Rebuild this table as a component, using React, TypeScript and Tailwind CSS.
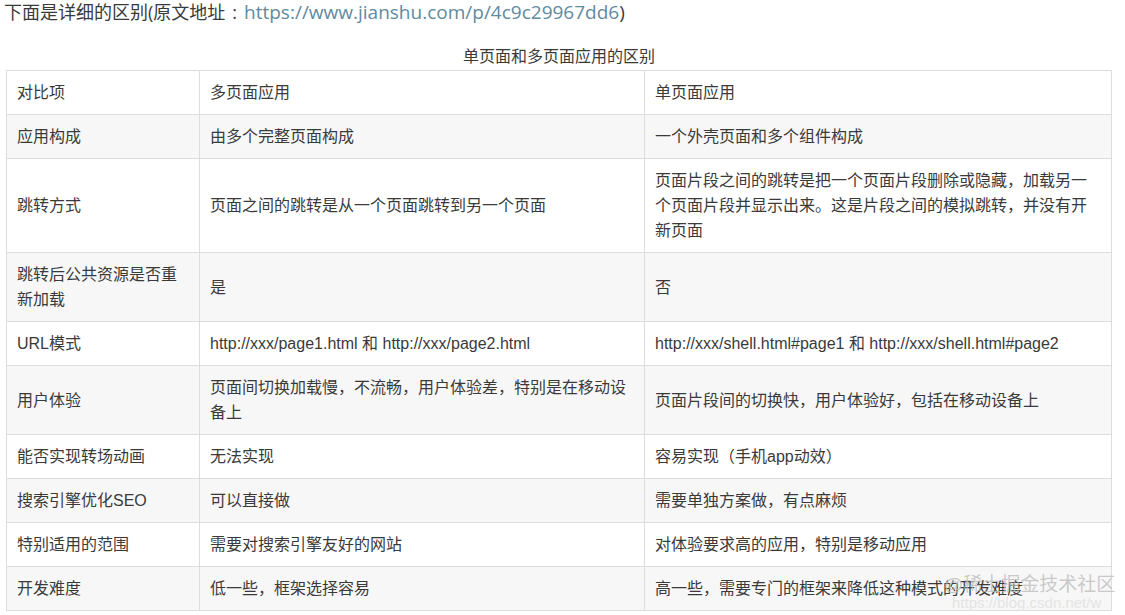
import React from 'react';

type Row = { label: React.ReactNode; multi: React.ReactNode; single: React.ReactNode };

const ROWS: Row[] = [
  { label: '对比项', multi: '多页面应用', single: '单页面应用' },
  { label: '应用构成', multi: '由多个完整页面构成', single: '一个外壳页面和多个组件构成' },
  {
    label: '跳转方式',
    multi: '页面之间的跳转是从一个页面跳转到另一个页面',
    single: (
      <>
        页面片段之间的跳转是把一个页面片段删除或隐藏，加载另一
        <br />
        个页面片段并显示出来。这是片段之间的模拟跳转，并没有开
        <br />
        新页面
      </>
    ),
  },
  {
    label: (
      <>
        跳转后公共资源是否重
        <br />
        新加载
      </>
    ),
    multi: '是',
    single: '否',
  },
  {
    label: 'URL模式',
    multi: 'http://xxx/page1.html 和 http://xxx/page2.html',
    single: 'http://xxx/shell.html#page1 和 http://xxx/shell.html#page2',
  },
  {
    label: '用户体验',
    multi: (
      <>
        页面间切换加载慢，不流畅，用户体验差，特别是在移动设
        <br />
        备上
      </>
    ),
    single: '页面片段间的切换快，用户体验好，包括在移动设备上',
  },
  { label: '能否实现转场动画', multi: '无法实现', single: '容易实现（手机app动效）' },
  { label: '搜索引擎优化SEO', multi: '可以直接做', single: '需要单独方案做，有点麻烦' },
  { label: '特别适用的范围', multi: '需要对搜索引擎友好的网站', single: '对体验要求高的应用，特别是移动应用' },
  { label: '开发难度', multi: '低一些，框架选择容易', single: '高一些，需要专门的框架来降低这种模式的开发难度' },
];

export default function App() {
  return (
    <div className="relative w-[1125px] h-[615px] overflow-hidden bg-white text-[#3a3a3a] font-['Liberation_Sans','Noto_Sans_CJK_SC',sans-serif]">
      <div className="h-[24px] pl-[4px] text-[18px] leading-[24px] whitespace-nowrap font-['Open_Sans','Noto_Sans_CJK_SC',sans-serif]">
        下面是详细的区别(原文地址<span className="mx-[7px]">:</span>
        <span className="text-[19px] text-[#5f8aa0]">https://www.jianshu.com/p/4c9c29967dd6</span>
        <span className="text-[19px]">)</span>
      </div>

      <div className="mt-[21px] ml-[6px] w-[1106px]">
        <div className="text-center text-[16px] leading-[24px] pb-[1px]">单页面和多页面应用的区别</div>
        <table className="w-full table-fixed border-collapse text-[16px] leading-[25px]">
          <colgroup>
            <col className="w-[193px]" />
            <col className="w-[445px]" />
            <col />
          </colgroup>
          <tbody>
            {ROWS.map((row, i) => (
              <tr key={i} className={i % 2 === 1 ? 'bg-[#f7f7f7]' : 'bg-white'}>
                <td className="border border-[#dddddd] px-[10px] py-[9px] align-middle">{row.label}</td>
                <td className="border border-[#dddddd] px-[10px] py-[9px] align-middle">{row.multi}</td>
                <td className="border border-[#dddddd] px-[10px] py-[9px] align-middle">{row.single}</td>
              </tr>
            ))}
          </tbody>
        </table>
      </div>

      {/* watermark */}
      <div className="absolute left-[944px] top-[573px] text-[19px] leading-[24px] text-[#bdbdbd]/80 whitespace-nowrap">
        @稀土掘金技术社区
      </div>
      <div className="absolute left-[952px] top-[594px] text-[15px] leading-[18px] text-[#e4e4e4] whitespace-nowrap">
        https://blog.csdn.net/w
      </div>
    </div>
  );
}
